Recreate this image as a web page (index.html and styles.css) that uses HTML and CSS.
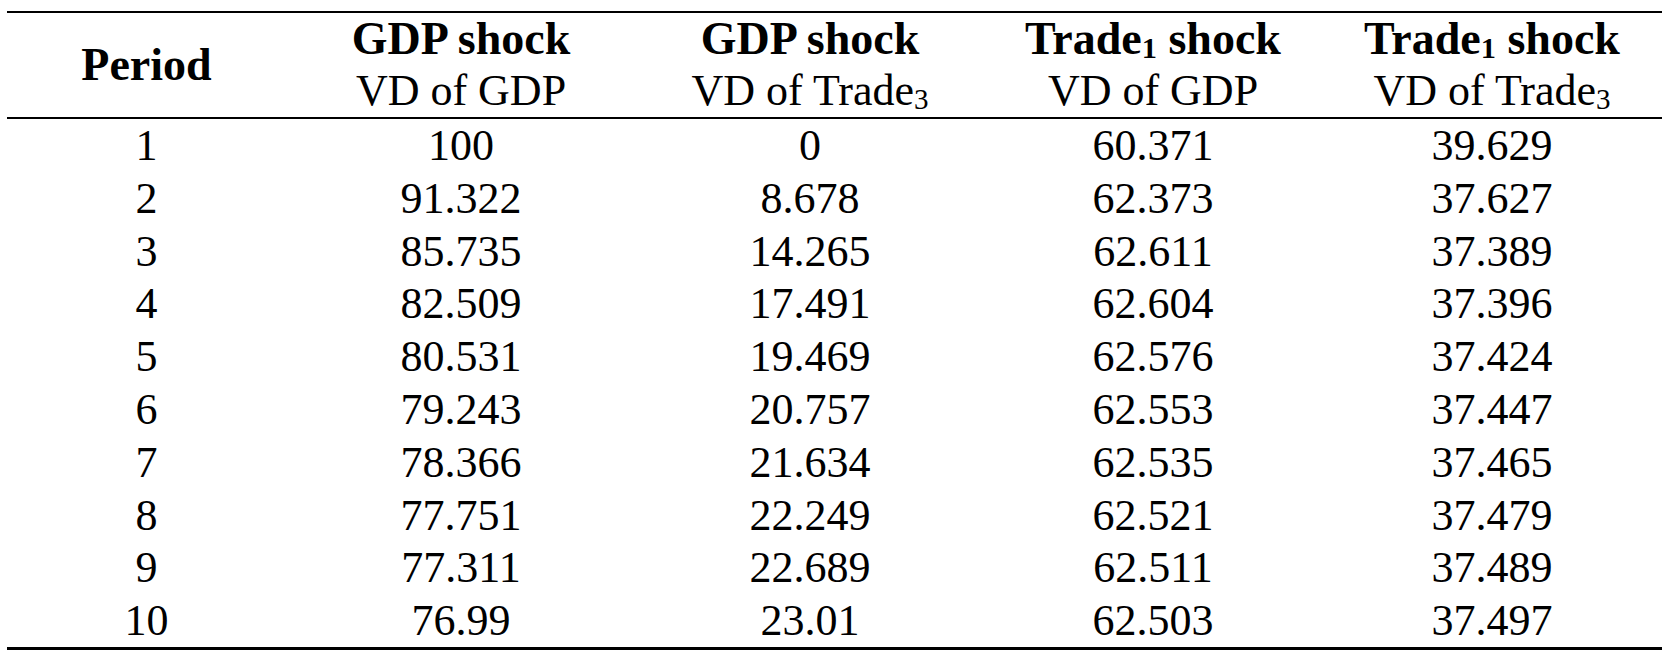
FILE: index.html
```html
<!DOCTYPE html>
<html>
<head>
<meta charset="utf-8">
<link rel="stylesheet" href="styles.css">
</head>
<body>
<table class="vd">
  <colgroup>
    <col class="c1"><col class="c2"><col class="c3"><col class="c4"><col class="c5">
  </colgroup>
  <thead>
    <tr>
      <th class="period">Period</th>
      <th><span class="b">GDP shock</span><br>VD of GDP</th>
      <th><span class="b">GDP shock</span><br>VD of Trade<sub>3</sub></th>
      <th><span class="b">Trade<sub>1</sub> shock</span><br>VD of GDP</th>
      <th><span class="b">Trade<sub>1</sub> shock</span><br>VD of Trade<sub>3</sub></th>
    </tr>
  </thead>
  <tbody>
    <tr><td>1</td><td>100</td><td>0</td><td>60.371</td><td>39.629</td></tr>
    <tr><td>2</td><td>91.322</td><td>8.678</td><td>62.373</td><td>37.627</td></tr>
    <tr><td>3</td><td>85.735</td><td>14.265</td><td>62.611</td><td>37.389</td></tr>
    <tr><td>4</td><td>82.509</td><td>17.491</td><td>62.604</td><td>37.396</td></tr>
    <tr><td>5</td><td>80.531</td><td>19.469</td><td>62.576</td><td>37.424</td></tr>
    <tr><td>6</td><td>79.243</td><td>20.757</td><td>62.553</td><td>37.447</td></tr>
    <tr><td>7</td><td>78.366</td><td>21.634</td><td>62.535</td><td>37.465</td></tr>
    <tr><td>8</td><td>77.751</td><td>22.249</td><td>62.521</td><td>37.479</td></tr>
    <tr><td>9</td><td>77.311</td><td>22.689</td><td>62.511</td><td>37.489</td></tr>
    <tr><td>10</td><td>76.99</td><td>23.01</td><td>62.503</td><td>37.497</td></tr>
  </tbody>
</table>
</body>
</html>
```
FILE: styles.css
```css
html, body {
  margin: 0;
  padding: 0;
  background: #ffffff;
}
body {
  font-family: "Liberation Serif", "Times New Roman", serif;
  color: #000000;
  overflow: hidden;
}
.vd {
  margin: 11px 0 0 7px;
  width: 1655px;
  border-collapse: collapse;
  table-layout: fixed;
  border-top: 2px solid #000;
  border-bottom: 4px solid #000;
  font-size: 44px;
  line-height: 50.8px;
}
.c1 { width: 279px; }
.c2 { width: 350px; }
.c3 { width: 348px; }
.c4 { width: 338px; }
.c5 { width: 340px; }
.vd th, .vd td {
  padding: 0;
  text-align: center;
  vertical-align: middle;
  white-space: nowrap;
}
.vd td {
  padding-top: 2px;
}
.vd thead tr {
  border-bottom: 2px solid #000;
}
.vd th {
  font-weight: normal;
  line-height: 52px;
}
.vd th.period,
.vd .b {
  font-weight: bold;
  font-size: 46px;
}
.vd .b {
  display: inline-block;
  line-height: 52px;
  vertical-align: top;
}
.vd sub {
  font-size: 0.66em;
  line-height: 0;
  vertical-align: -0.14em;
}
```
